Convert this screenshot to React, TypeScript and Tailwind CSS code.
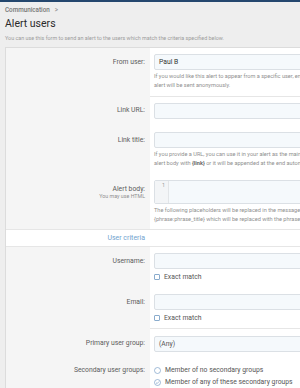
import React from "react";

function Label({ children }: { children: React.ReactNode }) {
  return (
    <div className="flex flex-col items-end">
      <div className="h-[16px] flex items-center text-[6.8px] text-[#5c5c5c] leading-none">{children}</div>
    </div>
  );
}

function Input({ value }: { value?: string }) {
  return (
    <div className="h-[16px] w-full border border-[#dbe0e5] rounded-[2px] bg-[#f5f9fc] flex items-center pl-[4px] text-[6.8px] text-[#333]">
      {value}
    </div>
  );
}

function Hint({ lines }: { lines: React.ReactNode[] }) {
  return (
    <div className="mt-[2px] text-[5.6px] leading-[9px] text-[#8f8f8f]">
      {lines.map((l, i) => (
        <div key={i} className="whitespace-nowrap">{l}</div>
      ))}
    </div>
  );
}

function Check({ label }: { label: string }) {
  return (
    <div className="mt-[3px] h-[10px] flex items-center gap-[4px] text-[6.8px] text-[#555]">
      <span className="w-[6px] h-[6px] border border-[#8aaccd] rounded-[1px] bg-white" />
      <span>{label}</span>
    </div>
  );
}

function Radio({ label, checked }: { label: string; checked?: boolean }) {
  return (
    <div className="h-[12px] flex items-center gap-[4px] text-[6.8px] text-[#555] whitespace-nowrap">
      <svg width="7" height="7" viewBox="0 0 14 14" className="flex-none">
        <circle cx="7" cy="7" r="6" fill="white" stroke="#6f99c2" strokeWidth="1.3" />
        {checked && <path d="M4 7.2 L6.2 9.3 L10 5" fill="none" stroke="#6f99c2" strokeWidth="1.3" />}
      </svg>
      <span>{label}</span>
    </div>
  );
}

function Row({
  label,
  children,
  dt = "pt-[6px]",
  dd = "pt-[6px] pb-[7px]",
  sep = false,
}: {
  label: React.ReactNode;
  children: React.ReactNode;
  dt?: string;
  dd?: string;
  sep?: boolean;
}) {
  return (
    <div className="flex">
      <div className={`w-[144px] flex-none bg-[#f5f5f5] pr-[5px] ${dt}`}>{label}</div>
      <div className={`flex-1 bg-white pl-[4px] pr-[4px] ${sep ? "border-t border-[#e6e6e6]" : ""} ${dd}`}>{children}</div>
    </div>
  );
}

export default function App() {
  return (
    <div className="w-[300px] h-[388px] overflow-hidden bg-[#eeeeee] border-t-2 border-[#24476e] font-['Roboto','Liberation_Sans',sans-serif]">
      <div className="pl-[5px]">
        <div className="mt-[5px] h-[7px] flex items-center gap-[5px] text-[6.3px] font-medium text-[#767676] leading-none">
          <span>Communication</span>
          <span className="text-[#9a9a9a]">&gt;</span>
        </div>
        <div className="mt-[4px] h-[13px] flex items-center text-[10.5px] text-[#2a2a2a] leading-none">Alert users</div>
        <div className="mt-[4px] h-[7px] flex items-center text-[5.4px] text-[#9c9c9c] leading-none whitespace-nowrap">
          You can use this form to send an alert to the users which match the criteria specified below.
        </div>
      </div>
      <div className="mt-[5px] ml-[5px] w-[420px] border border-[#dcdcdc] bg-white">
        <Row label={<Label>From user:</Label>} dd="pt-[6px] pb-[6px]">
          <Input value="Paul B" />
          <Hint
            lines={[
              "If you would like this alert to appear from a specific user, enter their name here. Otherwise, the",
              "alert will be sent anonymously.",
            ]}
          />
        </Row>
        <Row label={<Label>Link URL:</Label>} sep dd="pt-[6px] pb-[7px]">
          <Input />
        </Row>
        <Row label={<Label>Link title:</Label>} dd="pt-[6px] pb-[6px]">
          <Input />
          <Hint
            lines={[
              "If you provide a URL, you can use it in your alert as the main link to the content",
              <span>
                alert body with <b className="text-[#666]">{"{link}"}</b> or it will be appended at the end automatically.
              </span>,
            ]}
          />
        </Row>
        <Row
          label={
            <div className="flex flex-col items-end pt-[5px]">
              <div className="h-[8px] flex items-center text-[6.8px] text-[#5c5c5c] leading-none">Alert body:</div>
              <div className="h-[8px] flex items-center text-[5.3px] text-[#8f8f8f] leading-none">You may use HTML</div>
            </div>
          }
          dd="pt-[6px] pb-[5px]"
        >
          <div className="h-[24px] w-full border border-[#dbe0e5] rounded-[2px] bg-[#f5f9fc] flex">
            <div className="w-[14px] flex-none bg-[#f3f5f7] border-r border-[#e2e5e8] text-right pr-[3px] pt-[2px] text-[5.4px] text-[#9a9a9a] leading-none">
              1
            </div>
          </div>
          <Hint
            lines={[
              "The following placeholders will be replaced in the message: {name}, {user_id} and",
              "{phrase:phrase_title} which will be replaced with the phrase text in the language of the recipient.",
            ]}
          />
        </Row>
        <div className="h-[18px] border-t border-b border-[#e6e6e6] bg-white flex items-center">
          <div className="w-[144px] text-right pr-[5px] text-[7px] text-[#72a3cf] leading-none">User criteria</div>
        </div>
        <Row label={<Label>Username:</Label>} dd="pt-[6px] pb-[6px]">
          <Input />
          <Check label="Exact match" />
        </Row>
        <Row label={<Label>Email:</Label>} dd="pt-[6px] pb-[5px]">
          <Input />
          <Check label="Exact match" />
        </Row>
        <Row label={<Label>Primary user group:</Label>} sep dt="pt-[7px]" dd="pt-[7px] pb-[7px]">
          <div className="h-[16px] w-full border border-[#dbe0e5] rounded-[2px] bg-[#f5f9fc] flex items-center pl-[4px] text-[6.8px] text-[#555]">
            (Any)
          </div>
        </Row>
        <Row
          label={
            <div className="pt-[5px] flex justify-end">
              <div className="h-[12px] flex items-center text-[6.8px] text-[#5c5c5c] leading-none">Secondary user groups:</div>
            </div>
          }
          dt=""
          dd="pt-[5px] pb-[20px]"
        >
          <Radio label="Member of no secondary groups" />
          <Radio label="Member of any of these secondary groups" checked />
        </Row>
      </div>
    </div>
  );
}
